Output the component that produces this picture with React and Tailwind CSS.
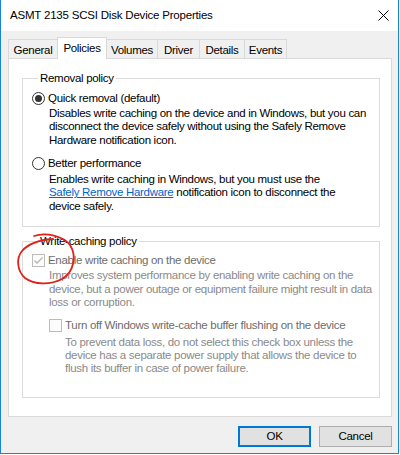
import React from "react";

function Radio({ checked }) {
  return (
    <span className="w-[13px] h-[13px] rounded-full border border-[#333333] bg-white flex items-center justify-center shrink-0">
      {checked && <span className="w-[7px] h-[7px] rounded-full bg-[#333333]" />}
    </span>
  );
}

function Check({ checked }) {
  return (
    <span className="w-[13px] h-[13px] border border-[#bcbcbc] bg-[#fcfcfc] flex items-center justify-center shrink-0">
      {checked && (
        <svg width="11" height="11" viewBox="0 0 11 11">
          <polyline points="1.5,5.5 4,8 9.5,2.5" fill="none" stroke="#b5b5b5" strokeWidth="1.3" />
        </svg>
      )}
    </span>
  );
}

const tabs = [
  { name: "General", w: "w-[49px]" },
  { name: "Policies", w: "w-[50px]", sel: true },
  { name: "Volumes", w: "w-[50px]" },
  { name: "Driver", w: "w-[42px]" },
  { name: "Details", w: "w-[45px]" },
  { name: "Events", w: "w-[43px]" },
];

export default function App() {
  return (
    <div className="relative w-[399px] h-[454px] bg-[#f0f0f0] border-x border-b border-[#1883d7] flex flex-col text-[11.5px] tracking-[-0.3px] text-black font-['Liberation_Sans',sans-serif] leading-[13px]">
      {/* title bar */}
      <div className="h-[31px] bg-white flex items-center justify-between pl-[9px] pr-[8px] shrink-0">
        <span className="text-[11.5px] leading-[15px] tracking-[-0.2px]">ASMT 2135 SCSI Disk Device Properties</span>
        <svg width="11" height="11" viewBox="0 0 11 11" className="mr-[1px]">
          <path d="M0.5 0.5 L10.5 10.5 M10.5 0.5 L0.5 10.5" stroke="#000" strokeWidth="1" />
        </svg>
      </div>

      {/* body */}
      <div className="flex-1 flex flex-col pl-[7px] pr-[6px] pt-[6px]">
        {/* tabs */}
        <div className="flex items-end h-[21px]">
          {tabs.map((t, i) =>
            t.sel ? (
              <div
                key={t.name}
                className={`${t.w} h-[22px] -mb-px relative z-10 bg-white border border-b-0 border-[#d9d9d9] flex items-center justify-center pb-[1px]`}
              >
                {t.name}
              </div>
            ) : (
              <div
                key={t.name}
                className={`${t.w} h-[19px] bg-[#f0f0f0] border-t border-[#d9d9d9] ${i === 0 ? "border-l" : ""} ${tabs[i - 1] && tabs[i - 1].sel ? "" : i > 0 ? "border-l" : ""} ${i === tabs.length - 1 ? "border-r" : ""} flex items-center justify-center pt-[2px]`}
              >
                {t.name}
              </div>
            )
          )}
        </div>

        {/* panel */}
        <div className="h-[359px] bg-white border border-[#d9d9d9] pt-[13px] pl-[13px] pr-[11px] flex flex-col">
          <fieldset className="border border-[#dcdcdc] pl-[9px] pb-[13px]">
            <legend className="ml-[6px] px-[2px] leading-[13px]">Removal policy</legend>
            <div className="mt-[7px] flex items-center h-[13px]">
              <Radio checked />
              <span className="ml-[3px]">Quick removal (default)</span>
            </div>
            <div className="mt-[2px] pl-[17px] leading-[13.33px] whitespace-nowrap">
              <div>Disables write caching on the device and in Windows, but you can</div>
              <div>disconnect the device safely without using the Safely Remove</div>
              <div>Hardware notification icon.</div>
            </div>
            <div className="mt-[10px] flex items-center h-[13px]">
              <Radio />
              <span className="ml-[3px]">Better performance</span>
            </div>
            <div className="mt-[3px] pl-[17px] leading-[13.33px] whitespace-nowrap">
              <div>Enables write caching in Windows, but you must use the</div>
              <div>
                <span className="text-[#0066cc] underline">Safely Remove Hardware</span> notification icon to disconnect the
              </div>
              <div>device safely.</div>
            </div>
          </fieldset>

          <fieldset className="mt-[8px] border border-[#dcdcdc] pl-[9px] pb-[22px]">
            <legend className="ml-[6px] px-[2px] leading-[13px]">Write-caching policy</legend>
            <div className="mt-[6px] flex items-center h-[13px]">
              <Check checked />
              <span className="ml-[3px] text-[#6d6d6d]">Enable write caching on the device</span>
            </div>
            <div className="mt-[2.5px] pl-[17px] leading-[13.5px] whitespace-nowrap text-[#8a8a8a]">
              <div>Improves system performance by enabling write caching on the</div>
              <div>device, but a power outage or equipment failure might result in data</div>
              <div>loss or corruption.</div>
            </div>
            <div className="mt-[9.5px] ml-[17px] flex items-center h-[13px]">
              <Check />
              <span className="ml-[3px] text-[#6d6d6d]">Turn off Windows write-cache buffer flushing on the device</span>
            </div>
            <div className="mt-[3.5px] pl-[33px] leading-[13px] whitespace-nowrap text-[#8a8a8a]">
              <div>To prevent data loss, do not select this check box unless the</div>
              <div>device has a separate power supply that allows the device to</div>
              <div>flush its buffer in case of power failure.</div>
            </div>
          </fieldset>
        </div>

        {/* buttons */}
        <div className="mt-[9px] flex justify-end gap-[8px]">
          <button className="w-[73px] h-[21px] bg-[#e1e1e1] border-2 border-[#0078d7] flex items-center justify-center leading-[13px]">
            OK
          </button>
          <button className="w-[73px] h-[21px] bg-[#e1e1e1] border border-[#adadad] flex items-center justify-center leading-[13px]">
            Cancel
          </button>
        </div>
      </div>

      {/* hand-drawn red annotation */}
      <svg className="absolute inset-0 pointer-events-none" width="399" height="454" viewBox="0 0 399 454">
        <path
          d="M33 236 C45 232, 62 236, 69 245 C76 256, 73 272, 61 279 C50 285, 33 285, 24 278 C16 271, 15 258, 21 251 C27 244, 38 240, 52 239"
          fill="none"
          stroke="#e0201a"
          strokeWidth="1.8"
          strokeLinecap="round"
        />
      </svg>
    </div>
  );
}
